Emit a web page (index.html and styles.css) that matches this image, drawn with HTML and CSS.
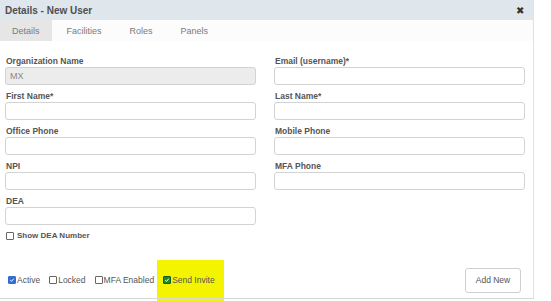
FILE: index.html
```html
<!DOCTYPE html>
<html lang="en">
<head>
    <meta charset="UTF-8">
    <meta name="viewport" content="width=device-width, initial-scale=1.0">
    <title>Details - New User</title>
    <link rel="stylesheet" href="styles.css">
</head>
<body>

    <div class="dialog">
        <div class="dialog-header">
            <h1>Details - New User</h1>
            <span class="close">&#10006;</span>
        </div>

        <div class="tabs">
            <span class="tab active">Details</span>
            <span class="tab">Facilities</span>
            <span class="tab">Roles</span>
            <span class="tab">Panels</span>
        </div>

        <div class="form">
            <div class="col">
                <div class="field">
                    <label>Organization Name</label>
                    <div class="input readonly">MX</div>
                </div>
                <div class="field">
                    <label>First Name*</label>
                    <div class="input"></div>
                </div>
                <div class="field">
                    <label>Office Phone</label>
                    <div class="input"></div>
                </div>
                <div class="field">
                    <label>NPI</label>
                    <div class="input"></div>
                </div>
                <div class="field">
                    <label>DEA</label>
                    <div class="input"></div>
                </div>
                <div class="check bold">
                    <span class="box"></span>Show DEA Number
                </div>
            </div>

            <div class="col">
                <div class="field">
                    <label>Email (username)*</label>
                    <div class="input"></div>
                </div>
                <div class="field">
                    <label>Last Name*</label>
                    <div class="input"></div>
                </div>
                <div class="field">
                    <label>Mobile Phone</label>
                    <div class="input"></div>
                </div>
                <div class="field">
                    <label>MFA Phone</label>
                    <div class="input"></div>
                </div>
            </div>
        </div>

        <div class="footer">
            <div class="check">
                <span class="box checked blue">
                    <svg viewBox="0 0 10 10"><path d="M2 5.2 L4.2 7.3 L8 2.8" fill="none" stroke="#fff" stroke-width="1.6"/></svg>
                </span>Active
            </div>
            <div class="check">
                <span class="box"></span>Locked
            </div>
            <div class="check">
                <span class="box"></span>MFA Enabled
            </div>
            <div class="check invite">
                <span class="highlight"></span>
                <span class="box checked green">
                    <svg viewBox="0 0 10 10"><path d="M2 5.2 L4.2 7.3 L8 2.8" fill="none" stroke="#fff" stroke-width="1.6"/></svg>
                </span>Send Invite
            </div>
            <button class="btn">Add New</button>
        </div>
    </div>

</body>
</html>
```

FILE: styles.css
```css
* {
    margin: 0;
    padding: 0;
    box-sizing: border-box;
    font-family: 'Liberation Sans', Arial, sans-serif;
}

body {
    background: #fff;
    width: 551px;
    height: 301px;
    overflow: hidden;
}

.dialog {
    width: 534px;
    height: 299px;
    border-right: 1px solid #e2e2e2;
    border-bottom: 1px solid #d8d8d8;
    display: flex;
    flex-direction: column;
}

.dialog-header {
    height: 20px;
    background: #dfe6ec;
    display: flex;
    align-items: center;
    justify-content: space-between;
    padding: 0 9px 0 5px;
}

.dialog-header h1 {
    font-size: 10px;
    font-weight: bold;
    color: #4f4f4f;
}

.close {
    font-size: 10px;
    color: #333;
}

.tabs {
    height: 21px;
    display: flex;
    align-items: stretch;
    background: #fdfcfd;
}

.tab {
    display: flex;
    align-items: center;
    font-size: 9px;
    color: #7a7a7a;
    padding: 0 12px;
    margin-right: 4px;
}

.tab.active {
    background: #e6e6e6;
    margin-right: 3px;
}

.form {
    display: grid;
    grid-template-columns: 251px 251px;
    column-gap: 18px;
    padding: 14px 0 0 5px;
}

.field {
    margin-bottom: 5px;
}

.field label {
    display: block;
    height: 12px;
    padding: 2px 0 0 1px;
    line-height: 9px;
    font-size: 8.5px;
    font-weight: bold;
    color: #555;
}

.input {
    height: 18px;
    border: 1px solid #d3d3d3;
    border-radius: 3px;
    background: #fff;
    font-size: 9px;
    color: #888;
    padding: 3px 4px;
}

.input.readonly {
    background: #ececec;
}

.check {
    display: flex;
    align-items: center;
    font-size: 8.5px;
    color: #555;
}

.check.bold {
    font-weight: bold;
    font-size: 8px;
    color: #555;
    margin-top: 6px;
    padding-left: 1px;
}

.box {
    width: 8px;
    height: 8px;
    border: 1px solid #666;
    border-radius: 1px;
    margin-right: 1px;
    background: #fff;
    display: flex;
}

.check.bold .box {
    margin-right: 3px;
}

.box svg {
    width: 100%;
    height: 100%;
}

.box.blue {
    background: #2d6fd2;
    border-color: #2d6fd2;
}

.box.green {
    background: #1f8a2c;
    border-color: #1a5a20;
}

.footer {
    margin-top: auto;
    height: 36px;
    display: flex;
    align-items: center;
    gap: 9px;
    padding: 0 12px 0 8px;
}

.footer .check {
    position: relative;
}

.highlight {
    position: absolute;
    left: -6px;
    right: -9px;
    top: -15px;
    bottom: -18px;
    background: #f4f400;
    z-index: -1;
}

.btn {
    margin-left: auto;
    width: 56px;
    height: 25px;
    border: 1px solid #cfcfcf;
    border-radius: 3px;
    background: #fff;
    font-size: 8.5px;
    color: #555;
}
```
